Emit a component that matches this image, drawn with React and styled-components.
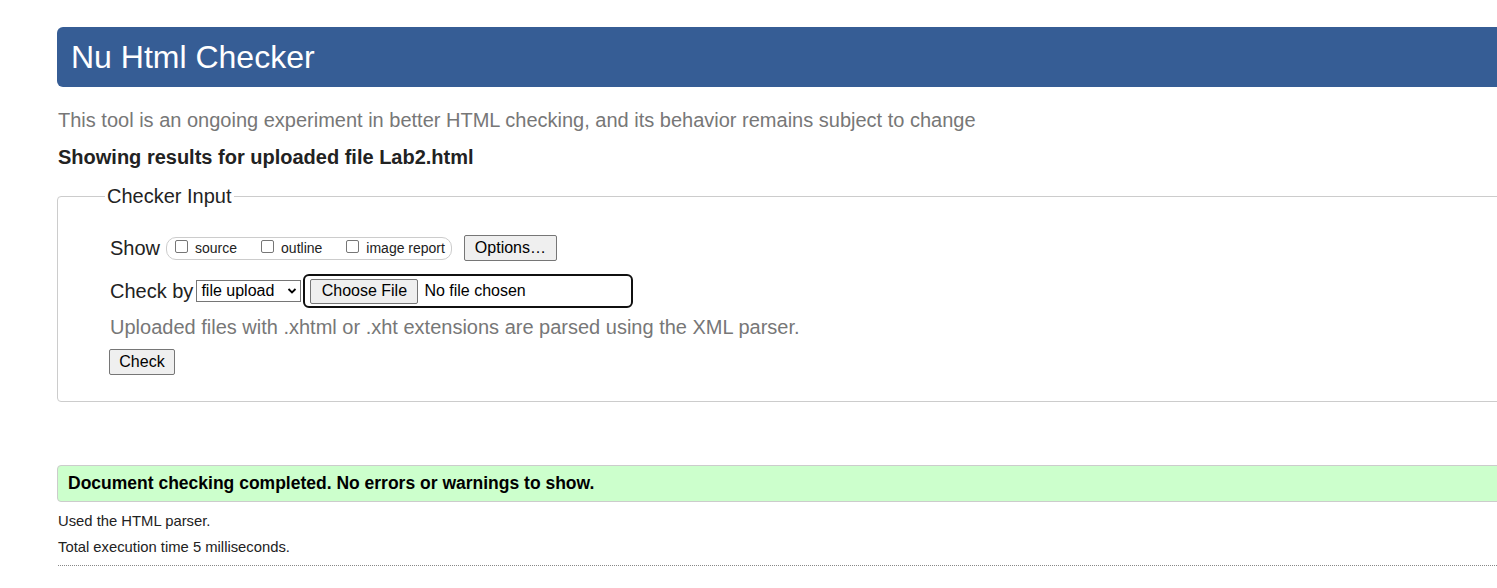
import React from "react";
import styled, { createGlobalStyle } from "styled-components";

const GlobalStyle = createGlobalStyle`
  html, body {
    margin: 0;
    padding: 0;
    background: #fff;
    overflow: hidden;
  }
  body {
    font-family: "Liberation Sans", Arial, sans-serif;
    color: #222;
  }
`;

const Page = styled.div`
  width: 1520px;
  padding: 27px 0 0 57px;
  display: flex;
  flex-direction: column;
`;

const Header = styled.h1`
  margin: 0;
  height: 60px;
  padding-left: 14px;
  display: flex;
  align-items: center;
  background: #365d95;
  color: #fff;
  font-size: 32px;
  font-weight: normal;
  border-radius: 6px 0 0 6px;
`;

const Intro = styled.p`
  margin: 22px 0 0 1px;
  font-size: 20px;
  line-height: 23px;
  color: #777;
`;

const ResultsFor = styled.p`
  margin: 14px 0 0 1px;
  font-size: 20px;
  line-height: 23px;
  font-weight: bold;
  color: #222;
`;

const Fieldset = styled.fieldset`
  margin: 16px 0 0 0;
  padding: 0 0 26px 47px;
  border: 1px solid #ccc;
  border-radius: 4px;
  display: flex;
  flex-direction: column;
  align-items: flex-start;
`;

const Legend = styled.legend`
  padding: 0 2px;
  font-size: 20px;
  line-height: 23px;
  color: #222;
`;

const Row = styled.div`
  display: flex;
  align-items: center;
  height: ${(p) => p.$h}px;
  margin: ${(p) => p.$top}px 0 0 5px;
`;

const RowLabel = styled.span`
  font-size: 20px;
  color: #222;
  margin-right: 6px;
`;

const Pill = styled.div`
  display: flex;
  align-items: center;
  height: 21px;
  padding: 0 6px 0 8px;
  border: 1px solid #ccc;
  border-radius: 10px;
`;

const Option = styled.label`
  display: flex;
  align-items: center;
  font-size: 14px;
  color: #222;
  margin-right: ${(p) => (p.$last ? 0 : 24)}px;
`;

const Box = styled.span`
  width: 11px;
  height: 11px;
  border: 1px solid #767676;
  border-radius: 2px;
  background: #fff;
  margin: -4px 7px 0 0;
`;

const Button = styled.button`
  font-family: "Liberation Sans", Arial, sans-serif;
  font-size: 16px;
  height: ${(p) => p.$h || 26}px;
  width: ${(p) => p.$w}px;
  padding: 0;
  margin-left: ${(p) => p.$ml || 0}px;
  background: #efefef;
  color: #000;
  border: 1px solid #767676;
  border-radius: 2px;
`;

const Select = styled.div`
  display: flex;
  align-items: center;
  justify-content: space-between;
  box-sizing: content-box;
  width: 96px;
  height: 20px;
  padding: 0 3px 0 4px;
  border: 1px solid #767676;
  font-size: 16px;
  color: #000;
  background: #fff;
  margin-left: -3px;
`;

const FileInput = styled.div`
  display: flex;
  align-items: center;
  width: 321px;
  height: 30px;
  margin-left: 2px;
  padding-left: 5px;
  border: 2px solid #101010;
  border-radius: 6px;
  font-size: 16px;
  color: #000;
`;

const FileName = styled.span`
  margin-left: 6px;
`;

const Hint = styled.p`
  margin: 8px 0 0 5px;
  font-size: 20px;
  line-height: 23px;
  color: #777;
`;

const Success = styled.div`
  margin-top: 63px;
  height: 35px;
  display: flex;
  align-items: center;
  padding-left: 10px;
  background: #ccffcc;
  border: 1px solid #ccc;
  border-radius: 4px;
  font-size: 17.5px;
  font-weight: bold;
  color: #000;
`;

const Stats = styled.div`
  margin: 11px 0 0 1px;
  display: flex;
  flex-direction: column;
  gap: 9px;
  font-size: 14.8px;
  line-height: 17px;
  color: #222;
  padding-bottom: 9px;
  border-bottom: 1px dotted #888;
`;

const Chevron = () => (
  <svg width="10" height="8" viewBox="0 0 10 8">
    <path d="M1.5 2l3.5 3.5L8.5 2" fill="none" stroke="#000" strokeWidth="1.8" />
  </svg>
);

export default function App() {
  return (
    <>
      <GlobalStyle />
      <Page>
        <Header>Nu Html Checker</Header>
        <Intro>
          This tool is an ongoing experiment in better HTML checking, and its
          behavior remains subject to change
        </Intro>
        <ResultsFor>Showing results for uploaded file Lab2.html</ResultsFor>
        <Fieldset>
          <Legend>Checker Input</Legend>
          <Row $h={26} $top={27}>
            <RowLabel>Show</RowLabel>
            <Pill>
              <Option><Box />source</Option>
              <Option><Box />outline</Option>
              <Option $last><Box />image report</Option>
            </Pill>
            <Button $w={93} $ml={12}>Options…</Button>
          </Row>
          <Row $h={34} $top={13}>
            <RowLabel>Check by</RowLabel>
            <Select>
              file upload
              <Chevron />
            </Select>
            <FileInput>
              <Button $w={108} $h={25}>Choose File</Button>
              <FileName>No file chosen</FileName>
            </FileInput>
          </Row>
          <Hint>Uploaded files with .xhtml or .xht extensions are parsed using the XML parser.</Hint>
          <Row $h={26} $top={10}>
            <Button $w={66} $ml={-1}>Check</Button>
          </Row>
        </Fieldset>
        <Success>Document checking completed. No errors or warnings to show.</Success>
        <Stats>
          <span>Used the HTML parser.</span>
          <span>Total execution time 5 milliseconds.</span>
        </Stats>
      </Page>
    </>
  );
}
